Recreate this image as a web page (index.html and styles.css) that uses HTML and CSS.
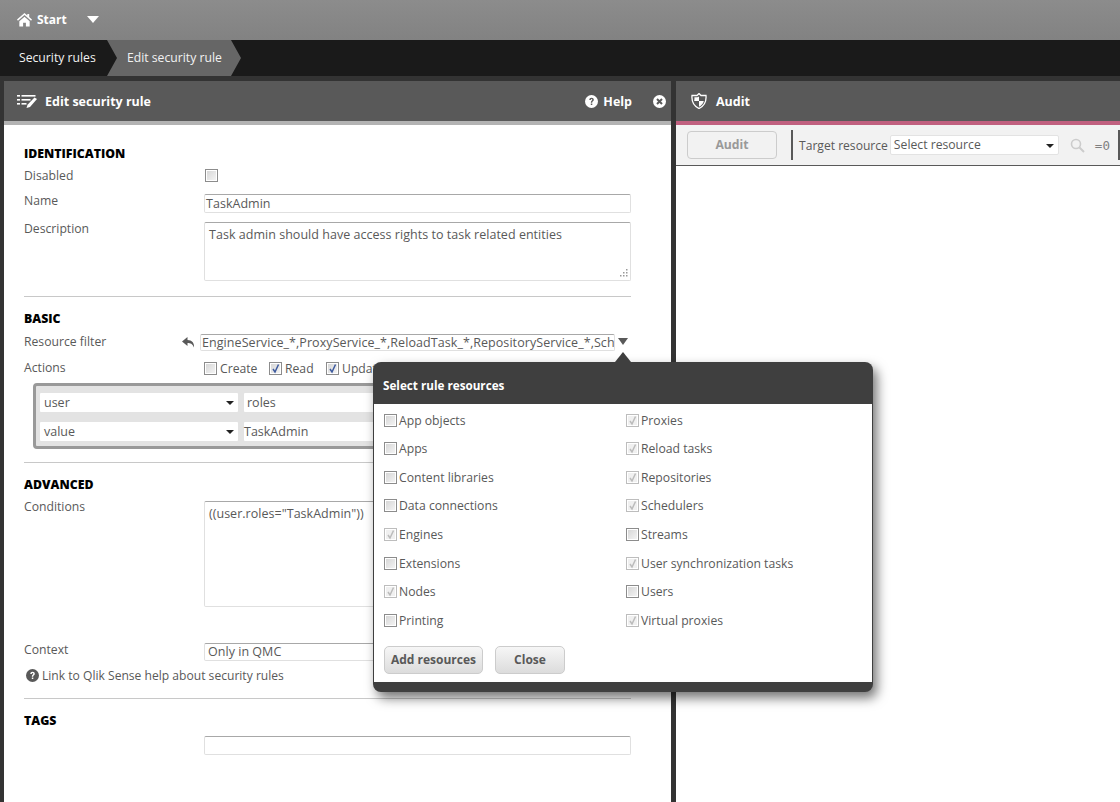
FILE: index.html
```html
<!DOCTYPE html>
<html lang="en">
<head>
<meta charset="utf-8">
<title>Edit security rule</title>
<link rel="stylesheet" href="styles.css">
</head>
<body>
<header class="topbar">
  <svg class="home" width="15" height="15" viewBox="0 0 16 15"><path d="M8 .5 0 7.500l1 1.200L8 2.700l7 6 1-1.200-3-2.600V1.500h-2v1.700z" fill="#fff"/><path d="M2.500 9.300 8 4.500l5.500 4.800V15H9.500v-4h-3v4h-4z" fill="#fff"/></svg>
  <span class="start">Start</span>
  <span class="tri-down"></span>
</header>
<nav class="crumbs">
  <span class="crumb">Security rules</span>
  <span class="crumb crumb-active">Edit security rule</span>
</nav>
<main class="main">
  <section class="panel panel-left">
    <div class="panel-head">
      <svg class="head-icon" width="20" height="14" viewBox="0 0 20 14"><g fill="#fff"><rect x="0" y="1" width="3" height="1.600"/><rect x="4.500" y="1" width="14" height="1.600"/><rect x="0" y="5" width="3" height="1.600"/><rect x="4.500" y="5" width="9" height="1.600"/><rect x="0" y="9" width="3" height="1.600"/><rect x="4.500" y="9" width="5" height="1.600"/><path d="M17.500 3.500 20 5l-7 8-3.500 1 1-3.200z"/></g></svg>
      <span class="head-title">Edit security rule</span>
      <span class="head-right">
        <svg class="help-icon" width="13" height="13" viewBox="0 0 13 13"><circle cx="6.500" cy="6.500" r="6.500" fill="#fff"/><path d="M4.300 5c0-1.400 1-2.200 2.300-2.200S8.800 3.600 8.800 4.800c0 1.500-1.600 1.500-1.600 2.900H5.800c0-2 1.500-2.100 1.500-2.900 0-.4-.3-.7-.7-.7-.5 0-.8.4-.8.900zM5.800 8.500h1.500V10H5.800z" fill="#595959"/></svg>
        <span class="help-text">Help</span>
        <svg class="close-icon" width="13" height="13" viewBox="0 0 13 13"><circle cx="6.500" cy="6.500" r="6.500" fill="#fff"/><path d="M4 4l5 5M9 4l-5 5" stroke="#595959" stroke-width="2"/></svg>
      </span>
    </div>
    <div class="stripe stripe-grey"></div>
    <div class="form">
      <h3 class="sec sec-first">IDENTIFICATION</h3>
      <div class="row row-disabled"><span class="lbl">Disabled</span><span class="cb"></span></div>
      <div class="row row-name"><span class="lbl lbl-up">Name</span><div class="field field-name">TaskAdmin</div></div>
      <div class="row row-desc"><span class="lbl lbl-up">Description</span><div class="field field-desc">Task admin should have access rights to task related entities<svg class="grip" width="10" height="10" viewBox="0 0 10 10"><g fill="#999"><rect x="8" y="0" width="1.500" height="1.500"/><rect x="5" y="3" width="1.500" height="1.500"/><rect x="8" y="3" width="1.500" height="1.500"/><rect x="2" y="6" width="1.500" height="1.500"/><rect x="5" y="6" width="1.500" height="1.500"/><rect x="8" y="6" width="1.500" height="1.500"/></g></svg></div></div>
      <hr class="rule rule-a">
      <h3 class="sec">BASIC</h3>
      <div class="row row-filter">
        <span class="lbl lbl-filter">Resource filter</span>
        <svg class="undo" width="13" height="11" viewBox="0 0 13 11"><path d="M5.500 0 0 4.500 5.500 9V6c3 0 5 .8 6.500 4.500C12.500 6 10 3 5.500 3z" fill="#595959"/></svg>
        <div class="field field-filter"><span class="clip">EngineService_*,ProxyService_*,ReloadTask_*,RepositoryService_*,Sch</span></div>
        <span class="filter-tri"></span>
      </div>
      <div class="row row-actions">
        <span class="lbl">Actions</span>
        <span class="acts">
          <span class="act act-create"><span class="cb"></span>Create</span>
          <span class="act act-read"><span class="cb"><svg width="11" height="11" viewBox="0 0 11 11"><path d="M3 6l2 3 3.500-7.500" fill="none" stroke="#3d5a9e" stroke-width="1.500"/></svg></span>Read</span>
          <span class="act act-update"><span class="cb"><svg width="11" height="11" viewBox="0 0 11 11"><path d="M3 6l2 3 3.500-7.500" fill="none" stroke="#3d5a9e" stroke-width="1.500"/></svg></span>Update</span>
          <span class="act"><span class="cb"></span>Delete</span>
        </span>
      </div>
      <div class="cond-box">
        <div class="cond-row"><div class="sel sel-a">user<span class="caret"></span></div><div class="sel sel-b">roles</div></div>
        <div class="cond-row cond-row-2"><div class="sel sel-a">value<span class="caret"></span></div><div class="sel sel-b sel-flat">TaskAdmin</div></div>
      </div>
      <hr class="rule rule-b">
      <h3 class="sec">ADVANCED</h3>
      <div class="row row-cond"><span class="lbl">Conditions</span><div class="field field-cond">((user.roles="TaskAdmin"))</div></div>
      <div class="row row-context"><span class="lbl">Context</span><div class="field field-context">Only in QMC</div></div>
      <div class="help-link">
        <svg width="13" height="13" viewBox="0 0 13 13"><circle cx="6.500" cy="6.500" r="6.500" fill="#595959"/><path d="M4.300 5c0-1.400 1-2.200 2.300-2.200S8.800 3.600 8.800 4.800c0 1.500-1.600 1.500-1.600 2.900H5.800c0-2 1.500-2.100 1.500-2.900 0-.4-.3-.7-.7-.7-.5 0-.8.4-.8.900zM5.800 8.500h1.500V10H5.800z" fill="#fff"/></svg>
        <span>Link to Qlik Sense help about security rules</span>
      </div>
      <hr class="rule rule-c">
      <h3 class="sec">TAGS</h3>
      <div class="row row-tags"><span class="lbl"></span><div class="field field-tags"></div></div>
    </div>
  </section>
  <section class="panel panel-right">
    <div class="panel-head">
      <svg class="shield" width="16" height="16" viewBox="0 0 16 16"><path d="M8 .5 10 2.500 15 2.500 C15.500 8 13 13 8 15.500 3 13 .5 8 1 2.500L6 2.500z" fill="none" stroke="#fff" stroke-width="1.300"/><path d="M8 3.500V8H3.200C3.500 6 3.500 5 3.400 4.200H6.500zM8 8h4.800C12.300 10.500 10.500 12.500 8 13.800z" fill="#fff"/></svg>
      <span class="head-title">Audit</span>
    </div>
    <div class="stripe stripe-pink"></div>
    <div class="toolbar">
      <span class="audit-btn">Audit</span>
      <span class="vsep"></span>
      <span class="target">Target resource</span>
      <div class="tool-select">Select resource<span class="caret"></span></div>
      <svg class="search" width="15" height="15" viewBox="0 0 15 15"><circle cx="6" cy="6" r="4.500" fill="none" stroke="#ccc" stroke-width="1.600"/><path d="M9.500 9.500 14 14" stroke="#ccc" stroke-width="2"/></svg>
      <span class="eq">=0</span>
      <span class="vsep vsep-end"></span>
    </div>
  </section>
</main>

<aside class="modal">
  <span class="modal-arrow"></span>
  <div class="modal-head">Select rule resources</div>
  <div class="modal-body">
    <div class="res-grid">
      <span class="res"><span class="cb"></span>App objects</span>
      <span class="res"><span class="cb cb-off"><svg width="11" height="11" viewBox="0 0 11 11"><path d="M3 6l2 3 3.500-7.500" fill="none" stroke="#bbb" stroke-width="1.500"/></svg></span>Proxies</span>
      <span class="res"><span class="cb"></span>Apps</span>
      <span class="res"><span class="cb cb-off"><svg width="11" height="11" viewBox="0 0 11 11"><path d="M3 6l2 3 3.500-7.500" fill="none" stroke="#bbb" stroke-width="1.500"/></svg></span>Reload tasks</span>
      <span class="res"><span class="cb"></span>Content libraries</span>
      <span class="res"><span class="cb cb-off"><svg width="11" height="11" viewBox="0 0 11 11"><path d="M3 6l2 3 3.500-7.500" fill="none" stroke="#bbb" stroke-width="1.500"/></svg></span>Repositories</span>
      <span class="res"><span class="cb"></span>Data connections</span>
      <span class="res"><span class="cb cb-off"><svg width="11" height="11" viewBox="0 0 11 11"><path d="M3 6l2 3 3.500-7.500" fill="none" stroke="#bbb" stroke-width="1.500"/></svg></span>Schedulers</span>
      <span class="res"><span class="cb cb-off"><svg width="11" height="11" viewBox="0 0 11 11"><path d="M3 6l2 3 3.500-7.500" fill="none" stroke="#bbb" stroke-width="1.500"/></svg></span>Engines</span>
      <span class="res"><span class="cb"></span>Streams</span>
      <span class="res"><span class="cb"></span>Extensions</span>
      <span class="res"><span class="cb cb-off"><svg width="11" height="11" viewBox="0 0 11 11"><path d="M3 6l2 3 3.500-7.500" fill="none" stroke="#bbb" stroke-width="1.500"/></svg></span>User synchronization tasks</span>
      <span class="res"><span class="cb cb-off"><svg width="11" height="11" viewBox="0 0 11 11"><path d="M3 6l2 3 3.500-7.500" fill="none" stroke="#bbb" stroke-width="1.500"/></svg></span>Nodes</span>
      <span class="res"><span class="cb"></span>Users</span>
      <span class="res"><span class="cb"></span>Printing</span>
      <span class="res"><span class="cb cb-off"><svg width="11" height="11" viewBox="0 0 11 11"><path d="M3 6l2 3 3.500-7.500" fill="none" stroke="#bbb" stroke-width="1.500"/></svg></span>Virtual proxies</span>
    </div>
    <div class="modal-btns">
      <span class="btn btn-add">Add resources</span>
      <span class="btn btn-close">Close</span>
    </div>
  </div>
</aside>
</body>
</html>
```
FILE: styles.css
```css
* { box-sizing: border-box; }
html, body { margin: 0; height: 100%; overflow: hidden; }
body {
  background: #333;
  font-family: "Open Sans", "Liberation Sans", sans-serif;
  font-size: 12.200px;
  color: #595959;
  display: flex;
  flex-direction: column;
  height: 802px;
  position: relative;
}
.topbar {
  height: 40px;
  flex: none;
  background: linear-gradient(#8c8c8c, #828282);
  display: flex;
  align-items: center;
  padding: 0 0 1px 17px;
  color: #fff;
  font-weight: 700;
}
.start { margin-left: 5px; font-size: 12px; }
.tri-down {
  margin-left: 20px;
  border-left: 6px solid transparent;
  border-right: 6px solid transparent;
  border-top: 7px solid #fff;
}
.crumbs {
  height: 36px;
  flex: none;
  background: #1a1a1a;
  display: flex;
  color: #fff;
  font-size: 12.200px;
}
.crumb {
  display: flex;
  align-items: center;
  padding: 0 0 2px 19px;
  width: 107px;
  white-space: nowrap;
  color: #f2f2f2;
}
.crumb-active {
  width: 134px;
  padding-left: 20px;
  background: #666;
  clip-path: polygon(0 0, 124px 0, 134px 50%, 124px 100%, 0 100%, 10px 50%);
}
.main {
  flex: 1;
  display: flex;
  gap: 5px;
  padding: 5px 0 0 4px;
  min-height: 0;
}
.panel { background: #fff; display: flex; flex-direction: column; }
.panel-left { width: 667px; }
.panel-right { flex: 1; min-width: 0; }
.panel-head {
  height: 40px;
  flex: none;
  background: #595959;
  display: flex;
  align-items: center;
  color: #fff;
  font-weight: 700;
  font-size: 12.500px;
}
.panel-left .panel-head { padding-left: 13px; }
.panel-right .panel-head { padding-left: 15px; }
.head-title { margin-left: 8px; }
.panel-right .head-title { margin-left: 9px; }
.head-right { margin-left: auto; display: flex; align-items: center; padding-right: 5px; }
.help-text { margin-left: 6px; margin-right: 21px; }
.help-icon { position: relative; left: 1px; }
.stripe { height: 4px; flex: none; }
.stripe-grey { background: #b3b3b3; }
.stripe-pink { background: #c0607f; }
.form { padding: 21px 40px 0 20px; flex: 1; }
.sec {
  margin: 14px 0 -1px;
  height: 16px;
  line-height: 16px;
  font-size: 12.300px;
  font-weight: 800;
  color: #000;
}
.sec-first { margin-top: 0; }
.row { display: flex; align-items: flex-start; }
.lbl { width: 180px; flex: none; height: 16px; line-height: 16px; }
.lbl-up { margin-top: -1px; }
.rule { border: 0; border-top: 1px solid #c8c8c8; margin: 0; height: 0; }
.rule-a { margin-top: 15px; }
.rule-b { margin-top: 13px; }
.rule-c { margin-top: 15px; }
.cb {
  width: 13px;
  height: 13px;
  flex: none;
  display: inline-block;
  border: 1px solid #8c8c8c;
  background: linear-gradient(135deg, #d4d4d4, #f6f6f6);
  box-shadow: inset 0 0 0 1px #fff;
  position: relative;
}
.cb svg { display: block; position: absolute; left: 0; top: 0; }
.cb-off { border-color: #bdbdbd; background: #f0f0f0; }
.field {
  border: 1px solid #e0e0e0;
  border-top-color: #a8a8a8;
  border-radius: 2px;
  background: #fff;
  padding: 0 4px;
  white-space: nowrap;
  overflow: hidden;
  font-size: 12.500px;
  letter-spacing: .03px;
  position: relative;
}
.row-disabled { margin-top: 7px; }
.row-disabled .cb { margin-top: 1px; margin-left: 1px; }
.row-name { margin-top: 10px; }
.field-name { width: 427px; height: 19px; line-height: 17px; padding-left: 1px; }
.row-desc { margin-top: 9px; }
.field-desc { width: 427px; height: 59px; padding-top: 3px; line-height: 17px; }
.grip { position: absolute; right: 2px; bottom: 1px; }
.row-filter { margin-top: 8px; position: relative; }
.lbl-filter { width: 158px; }
.undo { margin-top: 3px; flex: none; }
.field-filter { margin-left: 5px; width: 415px; height: 17px; line-height: 15px; padding: 0 0 0 1px; letter-spacing: .07px; }
.clip { display: block; overflow: hidden; }
.filter-tri {
  margin: 4px 0 0 3px;
  border-left: 5.500px solid transparent;
  border-right: 5.500px solid transparent;
  border-top: 7px solid #595959;
}
.row-actions { margin-top: 8px; }
.row-actions .lbl { margin-top: 1px; }
.acts { display: flex; }
.act { display: flex; align-items: center; line-height: 17px; height: 18px; white-space: nowrap; }
.act .cb { margin-right: 3px; }
.act-create { width: 65px; }
.act-read { width: 57px; }
.act-update { width: 70px; }
.cond-box {
  margin: 6px 0 0 9px;
  width: 598px;
  height: 66px;
  background: #e3e3e3;
  border: 3px solid #999;
  border-radius: 4px;
  padding: 7px 4px;
}
.cond-row { display: flex; gap: 6px; }
.cond-row-2 { margin-top: 10px; }
.sel {
  height: 19px;
  line-height: 19px;
  background: #fff;
  border-radius: 1px;
  position: relative;
  padding-left: 4px;
  font-size: 12.500px;
}
.sel-a { width: 198px; }
.sel-b { flex: 1; padding-left: 3px; }
.sel-flat { padding-left: 0; }
.caret {
  position: absolute;
  right: 4px;
  top: 8px;
  border-left: 4px solid transparent;
  border-right: 4px solid transparent;
  border-top: 4px solid #222;
}
.row-cond { margin-top: 9px; }
.row-cond .lbl { margin-top: -2px; }
.field-cond { width: 427px; height: 106px; padding-top: 3px; line-height: 17px; }
.row-context { margin-top: 36px; }
.field-context { width: 427px; height: 18px; line-height: 15px; padding-left: 3px; }
.row-context .lbl { margin-top: -1px; }
.help-link { margin-top: 6px; margin-left: 2px; display: flex; align-items: center; gap: 3px; height: 16px; white-space: nowrap; font-size: 12.100px; }
.row-tags { margin-top: 8px; }
.field-tags { width: 427px; height: 19px; }
.toolbar {
  height: 41px;
  flex: none;
  background: #f2f2f2;
  border-bottom: 1px solid #595959;
  display: flex;
  align-items: center;
  padding-left: 11px;
  white-space: nowrap;
}
.audit-btn {
  width: 90px;
  height: 28px;
  line-height: 26px;
  text-align: center;
  border: 1px solid #ccc;
  border-radius: 4px;
  color: #999;
  font-weight: 700;
}
.vsep { width: 2px; height: 30px; background: #595959; margin-left: 14px; flex: none; }
.target { margin-left: 6px; font-size: 12.100px; }
.tool-select {
  margin-left: 2px;
  width: 169px;
  height: 20px;
  line-height: 18px;
  background: #fff;
  border: 1px solid #e3e3e3;
  border-radius: 2px;
  padding-left: 3px;
  position: relative;
}
.search { margin-left: 11px; flex: none; }
.eq { margin-left: 10px; font-family: "DejaVu Sans Mono", monospace; font-size: 12.500px; color: #808080; }
.vsep-end { margin-left: 8px; }
.modal {
  position: absolute;
  left: 373px;
  top: 362px;
  width: 500px;
  height: 330px;
  background: #3f3f3f;
  border-radius: 8px;
  padding: 0 1px 10px;
  display: flex;
  flex-direction: column;
  box-shadow: 4px 6px 12px rgba(0, 0, 0, .55);
}
.modal-arrow {
  position: absolute;
  left: 242px;
  top: -10px;
  border-left: 8px solid transparent;
  border-right: 8px solid transparent;
  border-bottom: 10px solid #3f3f3f;
}
.modal-head {
  height: 42px;
  flex: none;
  line-height: 47px;
  padding-left: 9px;
  color: #fff;
  font-weight: 700;
  font-size: 11.700px;
}
.modal-body { flex: 1; background: #fff; padding: 2px 10px 0; font-size: 12.200px; }
.res-grid { display: grid; grid-template-columns: 242px 1fr; grid-auto-rows: 28.570px; }
.res { display: flex; align-items: center; gap: 2px; white-space: nowrap; }
.modal-btns { display: flex; gap: 12px; margin-top: 11px; }
.btn {
  height: 28px;
  line-height: 26px;
  text-align: center;
  border: 1px solid #ccc;
  border-radius: 5px;
  background: linear-gradient(#f6f6f6, #dcdcdc);
  font-weight: 700;
  font-size: 12px;
}
.btn-add { width: 99px; }
.btn-close { width: 70px; }
```
